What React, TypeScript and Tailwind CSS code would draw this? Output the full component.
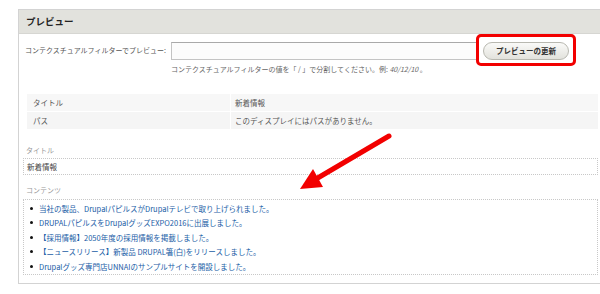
import React from 'react';

const items = [
  '当社の製品、DrupalパピルスがDrupalテレビで取り上げられました。',
  'DRUPALパピルスをDrupalグッズEXPO2016に出展しました。',
  '【採用情報】2050年度の採用情報を掲載しました。',
  '【ニュースリリース】新製品 DRUPAL箸(白)をリリースしました。',
  'Drupalグッズ専門店UNNAIのサンプルサイトを開設しました。',
];

const font = { fontFamily: '"Noto Sans CJK JP", "Open Sans", sans-serif' };

// red annotation arrow drawn over the page
const Arrow: React.FC = () => (
  <svg className="absolute left-0 top-0 pointer-events-none" width="600" height="294">
    <line x1="389" y1="136" x2="316" y2="179" stroke="#f20000" strokeWidth="5" strokeLinecap="round" />
    <polygon points="300,189 313,169 323,187" fill="#f20000" />
  </svg>
);

const App: React.FC = () => {
  return (
    <div className="relative w-[600px] h-[294px] bg-white overflow-hidden pt-[9px] pl-[18px]" style={font}>
      <div className="border-l border-t border-b border-[#d3d3d3] h-[275px]">
        {/* header */}
        <div className="h-[24px] bg-[#e2e2dd] border-b border-[#d6d6d2] flex items-center pl-[7px]">
          <span className="text-[9.5px] font-bold text-[#222]">プレビュー</span>
        </div>

        {/* contextual filter row */}
        <div className="flex pl-[6px] mt-[8px]">
          <div className="w-[146px] shrink-0 whitespace-nowrap text-[7px] text-[#555] leading-[14px] pt-[1px]">
            コンテクスチュアルフィルターでプレビュー:
          </div>
          <div className="flex flex-col">
            <div className="w-[306px] h-[18px] border border-[#c4c4c4] border-t-[#a9a9a9] bg-[#fcfcfc]" />
            <div className="mt-[4px] text-[7px] text-[#666] leading-[10px] whitespace-nowrap">
              コンテクスチュアルフィルターの値を「 / 」で分割してください。例: <em>40/12/10</em> 。
            </div>
          </div>
          <div className="relative ml-[6px]">
            <button className="w-[86px] h-[18px] rounded-full border border-[#b8b8b0] bg-gradient-to-b from-[#fafaf8] to-[#e2e2dc] text-[7.5px] font-bold text-[#333] flex items-center justify-center">
              プレビューの更新
            </button>
            <div className="absolute left-[-7px] top-[-8px] w-[100px] h-[32px] border-[3px] border-[#f20000] rounded-[5px]" />
          </div>
        </div>

        {/* info table */}
        <div className="ml-[8px] mt-[20px] w-[571px] text-[7.5px] text-[#555]">
          <div className="flex h-[18px] bg-[#f7f7f7] border-b border-white">
            <div className="w-[204px] pl-[6px] flex items-center border-r border-white">タイトル</div>
            <div className="pl-[4px] flex items-center">新着情報</div>
          </div>
          <div className="flex h-[17px] bg-[#f5f5f5]">
            <div className="w-[204px] pl-[6px] flex items-center border-r border-white">パス</div>
            <div className="pl-[4px] flex items-center">このディスプレイにはパスがありません。</div>
          </div>
        </div>

        {/* title field */}
        <div className="ml-[5px] mt-[16px] text-[7px] text-[#999] leading-[10px] pl-[2px]">タイトル</div>
        <div className="ml-[4px] mt-[3px] w-[575px] h-[17px] border border-dotted border-[#c8c8c8] flex items-center pl-[3px] text-[7.5px] text-[#444]">
          新着情報
        </div>

        {/* content field */}
        <div className="ml-[5px] mt-[10px] text-[7px] text-[#999] leading-[10px] pl-[2px]">コンテンツ</div>
        <div className="ml-[4px] mt-[4px] w-[575px] h-[76px] border border-dotted border-[#c8c8c8] pl-[6px] pt-[1px]">
          {items.map((t) => (
            <div key={t} className="flex items-center h-[14.5px]">
              <span className="w-[3px] h-[3px] rounded-full bg-[#111] mr-[6px]" />
              <a className="text-[7.5px] text-[#1a5da6]">{t}</a>
            </div>
          ))}
        </div>
      </div>
      <Arrow />
    </div>
  );
};

export default App;
